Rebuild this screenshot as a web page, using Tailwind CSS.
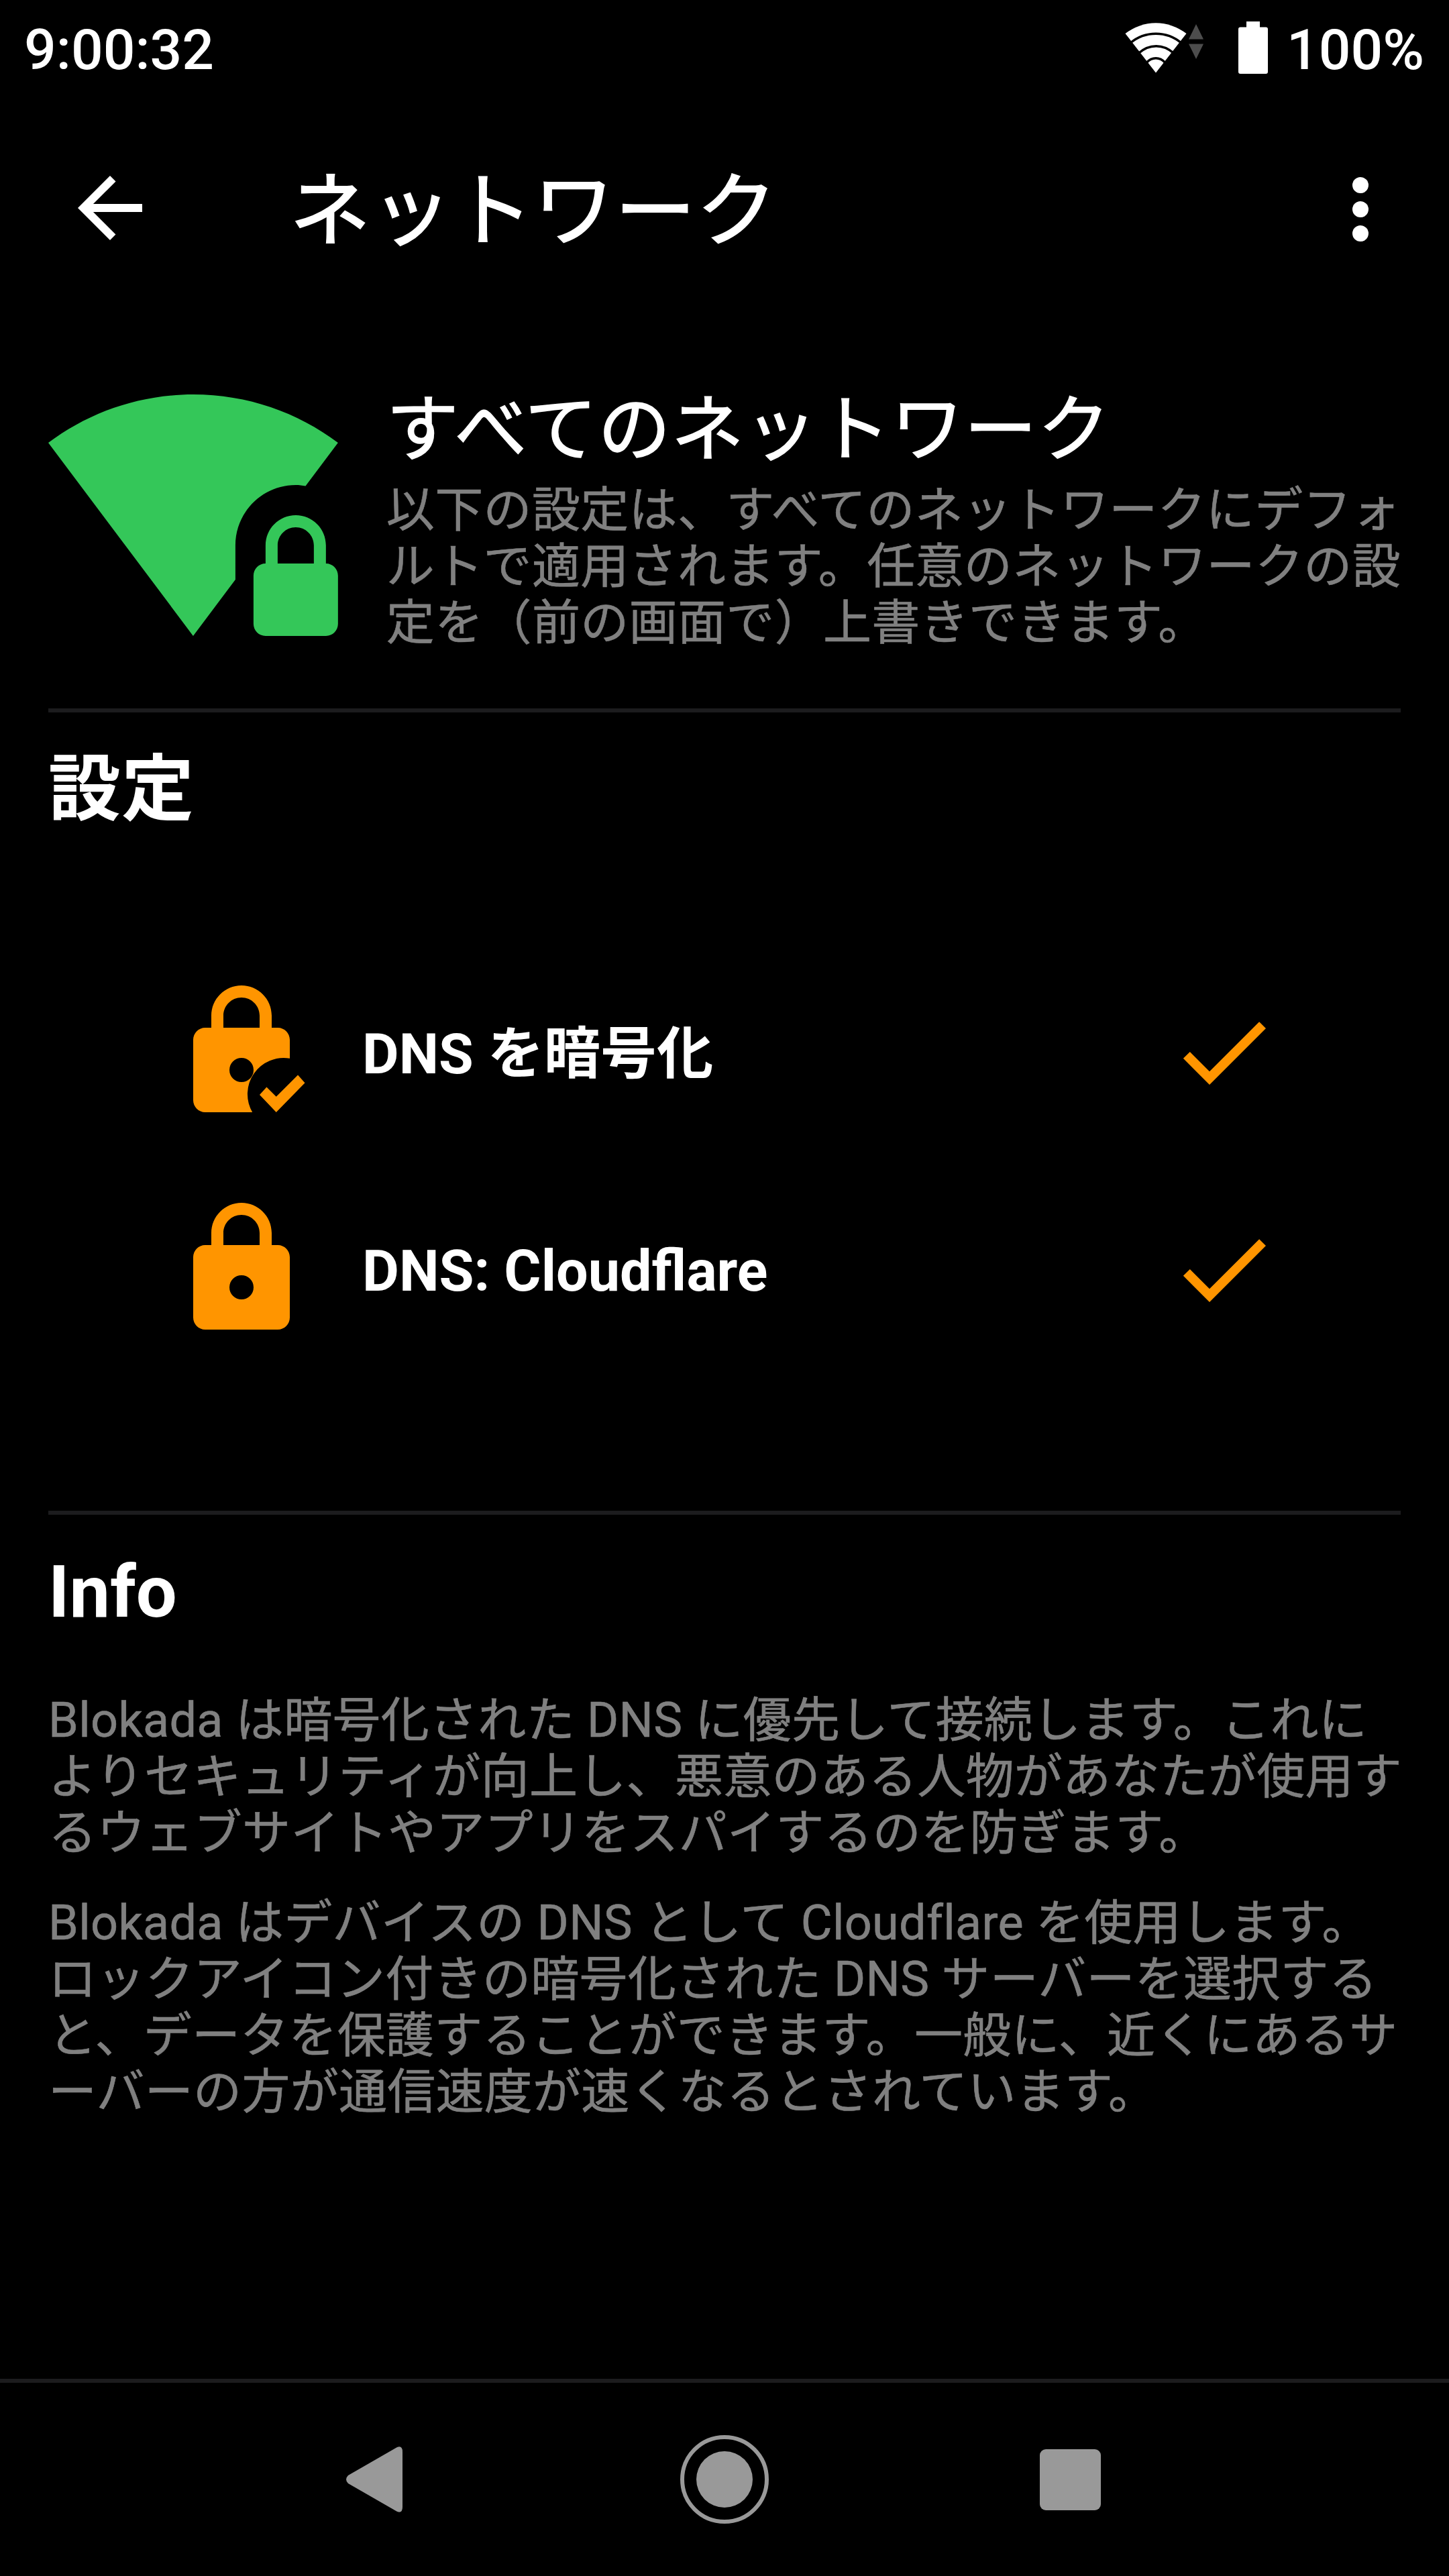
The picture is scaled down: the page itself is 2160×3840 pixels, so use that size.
<!DOCTYPE html>
<html lang="ja">
<head>
  <meta charset="UTF-8">
  <title>ネットワーク</title>
  <script src="https://cdn.jsdelivr.net/npm/@tailwindcss/browser@4"></script>
</head>
<body class="bg-black">
  <div class="w-[2160px] h-[3840px] bg-black text-white font-['Roboto','Noto_Sans_CJK_JP',sans-serif] flex flex-col overflow-hidden whitespace-nowrap">

    <!-- Status bar -->
    <div class="h-36 shrink-0 flex justify-between pl-9 pr-[37px] text-[84px] leading-[98px] font-medium">
      <span class="pt-[26px]">9:00:32</span>
      <div class="flex">
        <svg class="w-[92px] h-[76px] mt-[33px]" viewBox="0 0 92 76" fill="#fff">
          <path d="M46 75.500 L.5 17 A74 74 0 0 1 91.500 17 Z" />
          <g fill="none" stroke="#000" stroke-width="3.500">
            <path d="M8 31 C30 12.500 62 12.500 84 31" />
            <path d="M20 46.500 C36 32 57 32 73 46.500" />
            <path d="M32 60.500 C40 51.500 52 51.500 60 60.500" />
          </g>
        </svg>
        <svg class="w-[22px] h-[52px] ml-[3px] mt-9" viewBox="0 0 22 52" fill="#4d4d4d">
          <path d="M11 0l11 22.500H0zM11 52l11-22.500H0z" />
        </svg>
        <svg class="w-[44px] h-[78px] ml-[52px] mt-8" viewBox="0 0 44 78" fill="#fff">
          <path d="M12 0h20v8.500h9a3 3 0 0 1 3 3V75a3 3 0 0 1-3 3H3a3 3 0 0 1-3-3V11.500a3 3 0 0 1 3-3h9z" />
        </svg>
        <span class="pt-[26px] ml-7">100%</span>
      </div>
    </div>

    <!-- App bar -->
    <header class="h-[336px] shrink-0 flex items-center pl-[92px] pr-[60px]">
      <svg class="w-36 h-36 mb-1" viewBox="0 0 24 24" fill="#fff">
        <path d="M20 11H7.830l5.590-5.590L12 4l-8 8 8 8 1.410-1.410L7.830 13H20z" />
      </svg>
      <h1 class="ml-[196px] pt-2 text-[120px] leading-[140px] tracking-[1.2px] [-webkit-text-stroke:2px_white]">ネットワーク</h1>
      <svg class="w-36 h-36 ml-auto" viewBox="0 0 24 24" fill="#fff">
        <circle cx="12" cy="6" r="2" />
        <circle cx="12" cy="12" r="2" />
        <circle cx="12" cy="18" r="2" />
      </svg>
    </header>

    <main class="grow px-[72px]">
      <!-- Network summary -->
      <section class="h-[576px] pt-[108px] flex">
        <svg class="w-[432px] h-[360px]" viewBox="0 2 24 20" fill="#34c759">
          <path d="M20.500 9.500c.28 0 .55.040.81.080L24 6c-3.340-2.510-7.500-4-12-4S3.340 3.490 0 6l12 16 3.500-4.670V14.500c0-2.760 2.240-5 5-5zM23 16v-1.500c0-1.380-1.120-2.500-2.500-2.500S18 13.120 18 14.500V16c-.55 0-1 .45-1 1v4c0 .55.45 1 1 1h5c.55 0 1-.45 1-1v-4c0-.55-.45-1-1-1zm-1 0h-3v-1.500c0-.83.67-1.500 1.500-1.500s1.500.67 1.500 1.500z" />
        </svg>
        <div class="ml-[72px] -mt-1">
          <h2 class="-mt-[6px] text-[108px] leading-[126px] tracking-[1.2px] [-webkit-text-stroke:1.5px_white]">すべてのネットワーク</h2>
          <p class="mt-[15px] text-[72px] leading-[84px] tracking-[0.35px] text-[#808080] [-webkit-text-stroke:0.6px_#808080]">以下の設定は、すべてのネットワークにデフォ<br>ルトで適用されます。任意のネットワークの設<br>定を（前の画面で）上書きできます。</p>
        </div>
      </section>

      <!-- Settings -->
      <section class="h-[1196px] border-t-[6px] border-[#1c1c1e]">
        <h2 class="pt-[52px] text-[108px] leading-[126px] font-bold tracking-[1px]">設定</h2>
        <ul class="mt-[166px] text-[84px] leading-[98px] font-bold">
          <li class="h-[324px] px-[180px] flex items-center">
            <svg class="w-[216px] h-[216px]" viewBox="0 0 24 24" fill="#ff9500">
              <path fill-rule="evenodd" d="M20 13.080A6 6 0 0 0 13.800 22H6c-1.100 0-2-.9-2-2V10c0-1.100.9-2 2-2h1V6c0-2.760 2.240-5 5-5s5 2.240 5 5v2h1c1.100 0 2 .9 2 2zM12 13a2 2 0 1 0 0 4 2 2 0 0 0 0-4zM15 8V6c0-1.660-1.340-3-3-3S9 4.340 9 6v2z" />
              <path d="M17.750 22L15 19.100l1.160-1.260 1.590 1.590 3.590-3.590 1.160 1.310z" />
            </svg>
            <span class="ml-[72px] pt-[7px] tracking-[0.1px]">DNS を暗号化</span>
            <svg class="w-[168px] h-[168px] ml-auto" viewBox="0 0 24 24" fill="#ff9500">
              <path d="M9 16.170L4.830 12l-1.420 1.410L9 19 21 7l-1.410-1.410z" />
            </svg>
          </li>
          <li class="h-[324px] px-[180px] flex items-center">
            <svg class="w-[216px] h-[216px]" viewBox="0 0 24 24" fill="#ff9500">
              <path fill-rule="evenodd" d="M18 8c1.100 0 2 .9 2 2v10c0 1.100-.9 2-2 2H6c-1.100 0-2-.9-2-2V10c0-1.100.9-2 2-2h1V6c0-2.760 2.240-5 5-5s5 2.240 5 5v2zM12 13a2 2 0 1 0 0 4 2 2 0 0 0 0-4zM15 8V6c0-1.660-1.340-3-3-3S9 4.340 9 6v2z" />
            </svg>
            <span class="ml-[72px] pt-[7px] text-[84.500px]">DNS: Cloudflare</span>
            <svg class="w-[168px] h-[168px] ml-auto" viewBox="0 0 24 24" fill="#ff9500">
              <path d="M9 16.170L4.830 12l-1.420 1.410L9 19 21 7l-1.410-1.410z" />
            </svg>
          </li>
        </ul>
      </section>

      <!-- Info -->
      <section class="border-t-[6px] border-[#1c1c1e]">
        <h2 class="pt-[52px] text-[108px] leading-[126px] font-bold">Info</h2>
        <div class="mt-[87px] text-[72px] leading-[84px] tracking-[0.28px] text-[#808080] [-webkit-text-stroke:0.6px_#808080]">
          <p>Blokada は暗号化された DNS に優先して接続します。これに<br>よりセキュリティが向上し、悪意のある人物があなたが使用す<br>るウェブサイトやアプリをスパイするのを防ぎます。</p>
          <p class="mt-[50px]">Blokada はデバイスの DNS として Cloudflare を使用します。<br>ロックアイコン付きの暗号化された DNS サーバーを選択する<br>と、データを保護することができます。一般に、近くにあるサ<br>ーバーの方が通信速度が速くなるとされています。</p>
        </div>
      </section>
    </main>

    <!-- Navigation bar -->
    <nav class="h-[294px] shrink-0 border-t-[6px] border-[#1c1c1e] flex items-center pl-[516px]">
      <svg class="w-[84px] h-[98px]" viewBox="0 0 84 98" fill="#999">
        <path d="M3 43 L76 1 Q84 -2 84 8 V90 Q84 100 76 97 L3 55 Q-3 49 3 43 Z" />
      </svg>
      <svg class="w-[132px] h-[132px] ml-[414px]" viewBox="0 0 132 132">
        <circle cx="66" cy="66" r="63" fill="none" stroke="#999" stroke-width="6" />
        <circle cx="66" cy="66" r="42" fill="#999" />
      </svg>
      <div class="w-[91px] h-[91px] ml-[404px] rounded-[9px] bg-[#999]"></div>
    </nav>
  </div>
</body>
</html>
